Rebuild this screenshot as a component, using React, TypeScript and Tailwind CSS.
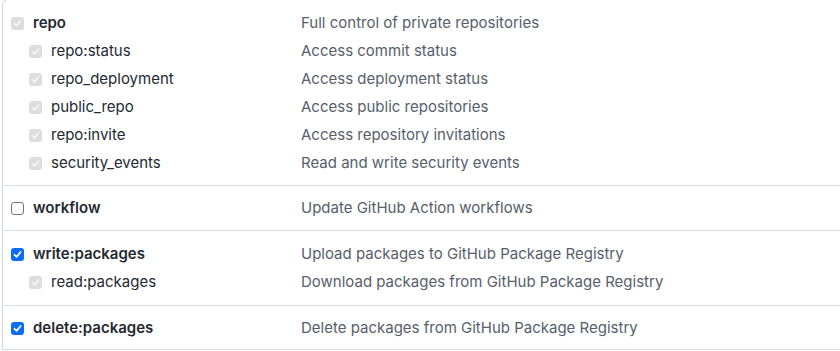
type Scope = { name: string; desc: string; state: "disabled" | "checked" | "empty"; sub?: boolean };

const groups: Scope[][] = [
  [
    { name: "repo", desc: "Full control of private repositories", state: "disabled" },
    { name: "repo:status", desc: "Access commit status", state: "disabled", sub: true },
    { name: "repo_deployment", desc: "Access deployment status", state: "disabled", sub: true },
    { name: "public_repo", desc: "Access public repositories", state: "disabled", sub: true },
    { name: "repo:invite", desc: "Access repository invitations", state: "disabled", sub: true },
    { name: "security_events", desc: "Read and write security events", state: "disabled", sub: true },
  ],
  [{ name: "workflow", desc: "Update GitHub Action workflows", state: "empty" }],
  [
    { name: "write:packages", desc: "Upload packages to GitHub Package Registry", state: "checked" },
    { name: "read:packages", desc: "Download packages from GitHub Package Registry", state: "disabled", sub: true },
  ],
  [{ name: "delete:packages", desc: "Delete packages from GitHub Package Registry", state: "checked" }],
];

const groupPad = ["pt-[9px] pb-2", "py-2", "pt-[9px] pb-[9px]", "pt-2 pb-[7px]"];

function Box({ state }: { state: Scope["state"] }) {
  if (state === "empty") {
    return <span className="w-[13px] h-[13px] shrink-0 rounded-[3px] border border-[#767676] bg-white" />;
  }
  const bg = state === "checked" ? "bg-[#0b6cf5]" : "bg-[#dddddd]";
  const stroke = state === "checked" ? "#ffffff" : "#f4f4f4";
  return (
    <span className={`w-[13px] h-[13px] shrink-0 rounded-[3px] ${bg} flex items-center justify-center`}>
      <svg width="9" height="9" viewBox="0 0 10 10" fill="none">
        <path d="M1.6 5.3 L4 7.6 L8.4 2.2" stroke={stroke} strokeWidth="1.9" strokeLinecap="round" strokeLinejoin="round" />
      </svg>
    </span>
  );
}

export default function App() {
  return (
    <div className="w-[840px] h-[351px] bg-white overflow-hidden font-['Inter',sans-serif] text-[15px]">
      <div className="ml-[2px] -mt-px border-l border-t border-[#d0d7de] rounded-tl-md">
        {groups.map((group, gi) => (
          <ul key={gi} className={`border-b border-[#d8dee4] ${groupPad[gi]}`}>
            {group.map((s) => (
              <li key={s.name} className="flex items-center h-7">
                <div className={`w-[298px] flex items-center gap-[9px] ${s.sub ? "pl-[26px]" : "pl-2"}`}>
                  <Box state={s.state} />
                  <span className={s.sub ? "text-[#24292f]" : "font-semibold text-[#24292f]"}>{s.name}</span>
                </div>
                <span className="text-[#57606a]">{s.desc}</span>
              </li>
            ))}
          </ul>
        ))}
      </div>
    </div>
  );
}
